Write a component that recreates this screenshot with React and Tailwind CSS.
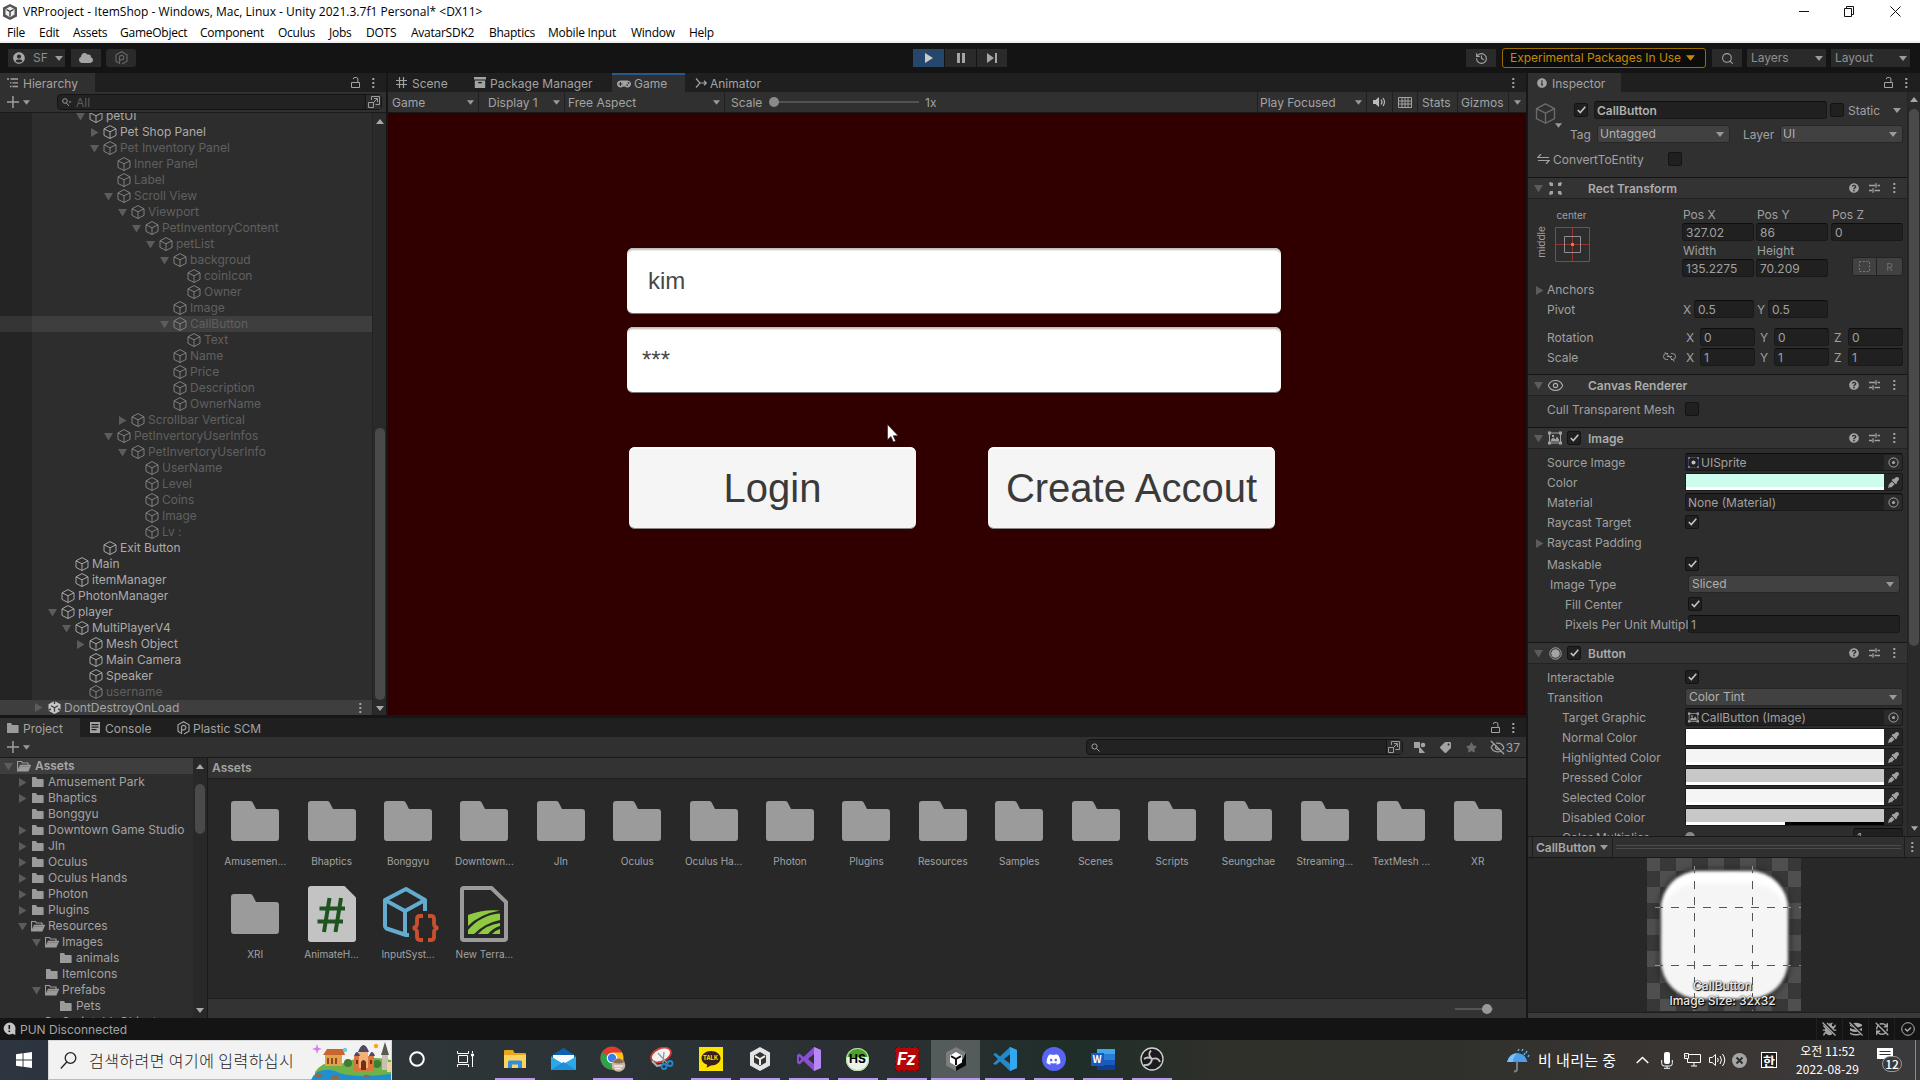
import React from "react";
import { FaDiscord, FaCloud, FaGamepad, FaTag, FaStar, FaUserCircle, FaInfoCircle, FaQuestionCircle, FaEyeDropper } from "react-icons/fa";
import { EyeOff, Eye, History, Search, Bug, RefreshCwOff } from "lucide-react";

/* ---------- small shared glyphs ---------- */

const Down = ({ c = "#9a9a9a", w = 8, h = 5, className = "" }) => (
  <svg width={w} height={h} viewBox="0 0 8 5" className={"shrink-0 " + className}><path d="M0 0h8L4 5z" fill={c} /></svg>
);
const Up = ({ className = "" }) => (
  <svg width="8" height="5" viewBox="0 0 8 5" className={className}><path d="M0 5h8L4 0z" fill="#a8a8a8" /></svg>
);
const Fold = ({ open, c = "#5c5c5c" }) => (
  <svg width="9" height="9" viewBox="0 0 9 9" className="shrink-0">
    <path d={open ? "M0 1h9L4.5 8.5z" : "M1 0v9l7.5-4.5z"} fill={c} />
  </svg>
);
const Dots = ({ c = "#a3a3a3" }) => (
  <svg width="3" height="12" viewBox="0 0 3 12" className="shrink-0"><path d="M.3 1h2v2h-2zM.3 5h2v2h-2zM.3 9h2v2h-2z" fill={c} /></svg>
);
const Lock = () => (
  <svg width="9" height="11" viewBox="0 0 9 11" fill="none" stroke="#a3a3a3" className="shrink-0"><path d="M.5 5.5h8v5h-8zM6.900 5V2a1.600 1.600 0 0 0-1.600-1.500H4A1.600 1.600 0 0 0 2.300 2.200" /></svg>
);
const Cube = ({ c = "#979797", s = 14, w = 1 }) => (
  <svg width={s} height={s} viewBox="0 0 14 14" fill="none" stroke={c} strokeWidth={w} strokeLinejoin="round" className="shrink-0">
    <path d="M7 .6 13 3.800v6.600L7 13.500 1 10.400V3.800zM1 3.800l6 3 6-3M7 6.800v6.700" />
  </svg>
);
const Folder = ({ open }) => (
  <svg width="14" height="12" viewBox="0 0 14 12" className="shrink-0">
    {open ? (
      <path d="M.5 11V1.500h4l1 1.500h5.500v2M.8 11l2.700-5.700H13.400L11 11z" fill="none" stroke="#9b9b9b" strokeWidth="1.200" />
    ) : (
      <path d="M1 1.500Q1 1 1.500 1H5l1.200 2H12q.6 0 .6.6v6.900q0 .5-.6.5H1.500Q1 11 1 10.500z" fill="#9b9b9b" />
    )}
    {open && <path d="M3.500 6.200H13L11 11H1z" fill="#9b9b9b" />}
  </svg>
);
const SceneLogo = () => (
  <svg width="13" height="13" viewBox="0 0 13 13" className="ml-[5px] shrink-0">
    <path d="M6.500 0 12.500 3.300v6.400L6.500 13 .5 9.700V3.300z" fill="#c6c6c6" />
    <path d="M6.500 6.800v4M6.500 6.800 3 4.800M6.500 6.800 10 4.800" stroke="#3e3e3e" strokeWidth="1.300" />
    <path d="M5.800 0h1.400v3H5.800zM0 8.500l2.600-1.300.7 1.200L.6 10zM13 8.500l-2.600-1.300-.7 1.200 2.700 1.600z" fill="#3e3e3e" />
  </svg>
);
const Plastic = ({ c }) => (
  <svg width="13" height="14" viewBox="0 0 13 14" fill="none" stroke={c} strokeWidth="1.200">
    <path d="M3.500 12 1 10.200V3.800L6.500.8 12 3.800v6.400L7 13M4.500 13V6a2.200 2.200 0 1 1 2.200 2.800H5" />
  </svg>
);
const Plus = () => (
  <svg width="12" height="12" viewBox="0 0 12 12" className="shrink-0"><path d="M5.200 0h1.500v5.200H12v1.500H6.700V12H5.200V6.700H0V5.200h5.200z" fill="#9e9e9e" /></svg>
);
const Sliders = () => (
  <svg width="11" height="10" viewBox="0 0 11 10" className="shrink-0"><path d="M0 2.500h6M8.500 2.500H11M7 .2v4.600M0 7.500h3M5.500 7.500H11M4 5.200v4.600" stroke="#a3a3a3" strokeWidth="1.300" fill="none" /></svg>
);
const Popout = () => (
  <svg width="12" height="12" viewBox="0 0 12 12" fill="none" stroke="#9a9a9a"><path d="M3.500.5h8v8h-4M3.500.5V4M.5 6.500h5v5h-5zM5 7l4.500-4.500M6 2.500h3.500V6" /></svg>
);
const Check = ({ on = true, className = "" }) => (
  <span className={"flex h-[14px] w-[14px] shrink-0 items-center justify-center rounded-[2px] border border-[#131313] bg-[#202020] " + className}>
    {on && <svg width="9" height="8" viewBox="0 0 9 8"><path d="M.8 4 3.300 6.500 8.300.8" fill="none" stroke="#c4c4c4" strokeWidth="1.600" /></svg>}
  </span>
);

/* ---------- window chrome ---------- */

const MENU = [["File", 32], ["Edit", 34], ["Assets", 47], ["GameObject", 80], ["Component", 78], ["Oculus", 51], ["Jobs", 37], ["DOTS", 45], ["AvatarSDK2", 78], ["Bhaptics", 59], ["Mobile Input", 83], ["Window", 58], ["Help", 40]];

function TitleBar() {
  return (
    <div className="h-[43px] shrink-0 border-b-2 border-[#eef0f0] bg-white text-[12px] text-black font-['Open_Sans','Noto_Sans_CJK_KR',sans-serif]">
      <div className="flex h-[22px] items-center pt-px">
        <svg width="14" height="16" viewBox="0 0 14 16" className="ml-[3px]"><path d="M7 0l7 3.500v9L7 16l-7-3.500v-9z" fill="#555" /><path d="M7 2.500l4.500 2.700v5.400L7 13.200l-4.500-2.600V5.200z" fill="#eee" /><path d="M7 7.500v5M7 7.500 3.500 5.500M7 7.500l3.500-2" stroke="#333" strokeWidth="1.300" /></svg>
        <span className="ml-[6px] whitespace-nowrap tracking-[0.02px]">VRProoject - ItemShop - Windows, Mac, Linux - Unity 2021.3.7f1 Personal* &lt;DX11&gt;</span>
        <span className="grow" />
        <svg width="102" height="11" viewBox="0 0 102 11" fill="none" stroke="#111" className="mr-[19px]">
          <path d="M0 5.500h10M45.500 2.500h7v8h-7zM47.500 2.500v-2h7v8h-2M91.500.5l10 10M101.500.5l-10 10" />
        </svg>
      </div>
      <div className="flex h-[21px] items-center pl-[7px] tracking-[-0.25px]">
        {MENU.map(([m, w]) => <span key={m} className="shrink-0 whitespace-nowrap" style={{ width: w }}>{m}</span>)}
      </div>
    </div>
  );
}

const Btn = ({ className = "", children }) => (
  <div className={"flex h-[18px] shrink-0 items-center bg-[#2a2a2a] " + className}>{children}</div>
);

function TopBar() {
  return (
    <div className="flex h-[30px] shrink-0 items-center bg-[#141414] text-[12px] text-[#8f8f8f]">
      <Btn className="ml-[8px] w-[57px] pl-[5px]"><FaUserCircle size={12} color="#a5a5a5" /><span className="ml-[8px] w-[22px]">SF</span><Down /></Btn>
      <Btn className="ml-[6px] w-[30px] justify-center"><FaCloud size={14} color="#a5a5a5" /></Btn>
      <Btn className="ml-[5px] w-[30px] justify-center rounded-[3px] bg-[#1d1d1d]"><Plastic c="#666" /></Btn>
      <Btn className="ml-[777px] w-[31px] justify-center bg-[#25476b]"><svg width="8" height="10"><path d="M0 0v10l8-5z" fill="#c9c9c9" /></svg></Btn>
      <Btn className="ml-px w-[31px] justify-center"><svg width="8" height="10"><path d="M0 0h3v10H0zM5 0h3v10H5z" fill="#a5a5a5" /></svg></Btn>
      <Btn className="ml-px w-[30px] justify-center"><svg width="10" height="10"><path d="M0 0v10l7-5zM8 0h2v10H8z" fill="#a5a5a5" /></svg></Btn>
      <span className="grow" />
      <Btn className="w-[30px] justify-center"><History size={13} color="#a5a5a5" /></Btn>
      <div className="ml-[6px] flex h-[20px] w-[204px] items-center justify-between rounded-[3px] border border-[#9a6c00] bg-[#0c0c0c] pl-[7px] pr-[10px] text-[#c48b00]">
        <span className="whitespace-nowrap tracking-[-0.03px]">Experimental Packages In Use</span><Down c="#c48b00" w={9} h={6} />
      </div>
      <Btn className="ml-[6px] w-[30px] justify-center"><Search size={13} color="#a5a5a5" /></Btn>
      <Btn className="ml-[5px] w-[79px] justify-between pl-[4px] pr-[3px]">Layers<Down /></Btn>
      <Btn className="ml-[5px] mr-[10px] w-[79px] justify-between pl-[4px] pr-[3px]">Layout<Down /></Btn>
    </div>
  );
}

/* ---------- hierarchy ---------- */

// name, depth, fold state (o open, c closed, - none), active, selected
const TREE = [
  ["petUI", 4, "o", 1], ["Pet Shop Panel", 5, "c", 1], ["Pet Inventory Panel", 5, "o", 0], ["Inner Panel", 6, "-", 0], ["Label", 6, "-", 0],
  ["Scroll View", 6, "o", 0], ["Viewport", 7, "o", 0], ["PetInventoryContent", 8, "o", 0], ["petList", 9, "o", 0], ["backgroud", 10, "o", 0],
  ["coinIcon", 11, "-", 0], ["Owner", 11, "-", 0], ["Image", 10, "-", 0], ["CallButton", 10, "o", 0, 1], ["Text", 11, "-", 0], ["Name", 10, "-", 0],
  ["Price", 10, "-", 0], ["Description", 10, "-", 0], ["OwnerName", 10, "-", 0], ["Scrollbar Vertical", 7, "c", 0], ["PetInvertoryUserInfos", 6, "o", 0],
  ["PetInvertoryUserInfo", 7, "o", 0], ["UserName", 8, "-", 0], ["Level", 8, "-", 0], ["Coins", 8, "-", 0], ["Image", 8, "-", 0], ["Lv :", 8, "-", 0],
  ["Exit Button", 5, "-", 1], ["Main", 3, "-", 1], ["itemManager", 3, "-", 1], ["PhotonManager", 2, "-", 1], ["player", 2, "o", 1],
  ["MultiPlayerV4", 3, "o", 1], ["Mesh Object", 4, "c", 1], ["Main Camera", 4, "-", 1], ["Speaker", 4, "-", 1], ["username", 4, "-", 0],
];

function Hierarchy() {
  return (
    <section className="flex w-[386px] shrink-0 flex-col bg-[#2d2d2d]">
      <div className="flex h-[19px] shrink-0 items-center bg-[#1f1f1f]">
        <div className="flex h-full w-[95px] items-center bg-[#303030] pl-[7px] pt-[2px]">
          <svg width="12" height="10" viewBox="0 0 12 10" className="-mt-[2px]"><path d="M0 1h2M3.500 1H11M3 4.800h1.500M5.500 4.800H11M3 8.500h1.500M5.500 8.500H11" stroke="#a3a3a3" strokeWidth="1.300" /></svg>
          <span className="ml-[4px]">Hierarchy</span>
        </div>
        <span className="grow" />
        <Lock /><span className="w-[12px]" /><Dots /><span className="w-[11px]" />
      </div>
      <div className="flex h-[21px] shrink-0 items-center border-b border-[#1a1a1a] bg-[#303030] pl-[7px]">
        <Plus /><Down className="ml-[4px]" w={7} />
        <div className="ml-[27px] flex h-[16px] w-[325px] items-center rounded-[4px] border border-[#141414] bg-[#222] pl-[4px] text-[#5d5d5d]">
          <svg width="10" height="9" viewBox="0 0 10 9"><circle cx="3" cy="3" r="2.300" fill="none" stroke="#9a9a9a" /><path d="M4.500 5 7 8" stroke="#9a9a9a" /><path d="M6.500 3.500h3L8 5z" fill="#9a9a9a" /></svg>
          <span className="ml-[4px] grow pt-px">All</span>
          <span className="flex h-full w-[16px] items-center justify-center border-l border-[#141414] bg-[#2d2d2d]"><Popout /></span>
        </div>
      </div>
      <div className="flex h-[602px] shrink-0">
        <div className="flex min-w-0 grow flex-col justify-end overflow-hidden bg-[linear-gradient(90deg,#242424_32px,#2d2d2d_32px)]">
          {TREE.map(([n, d, f, act, sel], i) => (
            <div key={i} className={"flex h-[16px] shrink-0 items-center " + (sel ? "bg-[linear-gradient(90deg,#353535_32px,#3e3e3e_32px)] " : "") + (act ? "text-[#ababab]" : "text-[#606060]")} style={{ paddingLeft: 20 + d * 14 }}>
              <span className="flex w-[13px] shrink-0"> {f !== "-" && <Fold open={f === "o"} />}</span>
              <Cube c={act ? "#a6a6a6" : "#808080"} />
              <span className="ml-[3px] whitespace-nowrap">{n}</span>
            </div>
          ))}
          <div className="flex h-[15px] shrink-0 items-center bg-[#3e3e3e] pl-[34px] text-[#a3a3a3]">
            <Fold /><SceneLogo /><span className="ml-[3px] grow">DontDestroyOnLoad</span><Dots /><span className="w-[10px]" />
          </div>
        </div>
        <div className="flex w-[14px] shrink-0 flex-col items-center border-l border-[#232323] bg-[#2a2a2a]">
          <Up className="mt-[6px]" />
          <div className="mt-[304px] h-[272px] w-[10px] rounded-full bg-[#4a4a4a]" />
          <Down className="mt-[6px]" c="#a8a8a8" />
        </div>
      </div>
    </section>
  );
}

/* ---------- game view ---------- */

const Field = ({ children, className }) => (
  <div className={"h-[66px] w-[654px] rounded-[6px] border-b border-[#777] bg-white text-[24px] leading-[24px] text-[#484848] shadow-[inset_0_3px_2px_-1px_#bdbdbd] font-['Liberation_Sans',sans-serif] " + className}>{children}</div>
);
const GameBtn = ({ children }) => (
  <div className="flex h-[82px] w-[287px] items-center justify-center whitespace-nowrap rounded-[6px] border-b border-[#888] bg-[#f5f5f5] text-[40px] leading-none text-[#3a3a3a] shadow-[inset_0_3px_1px_-1px_#fff] font-['Liberation_Sans',sans-serif]">{children}</div>
);

function GameView() {
  return (
    <section className="flex h-[642px] shrink-0 flex-col">
      <div className="flex h-[19px] shrink-0 items-center bg-[#1f1f1f] text-[#a3a3a3]">
        <svg width="11" height="11" viewBox="0 0 11 11" className="ml-[8px]"><path d="M3.500 0v11M7.500 0v11M0 3.500h11M0 7.500h11" stroke="#a3a3a3" strokeWidth="1.200" /></svg>
        <span className="ml-[5px] w-[62px] pt-[2px]">Scene</span>
        <svg width="12" height="11" viewBox="0 0 12 11"><path d="M0 0h12v2.500H0zM.8 3.500h10.400V11H.8zM4 5v1.300h4V5z" fill="#a3a3a3" fillRule="evenodd" /></svg>
        <span className="ml-[4px] w-[122px] pt-[2px]">Package Manager</span>
        <div className="flex h-full w-[73px] items-center border-t-2 border-[#2a568a] bg-[#303030] pl-[5px]"><FaGamepad size={14} /><span className="ml-[3px] pt-px">Game</span></div>
        <svg width="12" height="10" viewBox="0 0 12 10" className="ml-[10px]" fill="none" stroke="#a3a3a3" strokeWidth="1.200"><path d="M1 .5 5 5 1 9.500M5 5h6M9 2.800 11.300 5 9 7.200" /></svg>
        <span className="ml-[3px] pt-[2px]">Animator</span>
        <span className="grow" /><Dots /><span className="w-[11px]" />
      </div>
      <div className="flex h-[21px] shrink-0 items-center border-b border-[#1a1a1a] bg-[#303030]">
        <span className="flex h-full w-[91px] items-center justify-between border-r border-[#202020] pl-[4px] pr-[4px] pt-px">Game<Down w={7} /></span>
        <span className="flex h-full w-[86px] items-center justify-between border-r border-[#202020] pl-[9px] pr-[4px] pt-px">Display 1<Down w={7} /></span>
        <span className="flex h-full w-[160px] items-center justify-between border-r border-[#202020] pl-[3px] pr-[4px] pt-px">Free Aspect<Down w={7} /></span>
        <span className="ml-[6px] w-[38px] pt-px">Scale</span>
        <span className="flex h-[2px] w-[150px] items-center bg-[linear-gradient(90deg,transparent_5px,#525252_5px)]"><span className="h-[10px] w-[10px] shrink-0 rounded-full bg-[#8a8a8a]" /></span>
        <span className="ml-[6px] pt-px">1x</span>
        <span className="grow" />
        <span className="flex h-full w-[110px] items-center justify-between border-x border-[#202020] pl-[2px] pr-[4px] pt-px">Play Focused<Down w={7} /></span>
        <span className="flex h-full w-[26px] items-center justify-center border-r border-[#202020]">
          <svg width="14" height="10" viewBox="0 0 14 10"><path d="M0 3h2.500L6 0v10L2.500 7H0z" fill="#bbb" /><path d="M8 2.500q2 2.500 0 5M10 1q3 4 0 8" stroke="#bbb" fill="none" strokeWidth="1.200" /></svg>
        </span>
        <span className="flex h-full w-[25px] items-center justify-center border-r border-[#202020]">
          <svg width="14" height="11" viewBox="0 0 14 11" fill="none" stroke="#a3a3a3"><path d="M.5.5h13v10H.5zM.5 4h13M.5 7h13M4 .5v10M7 .5v10M10 .5v10" /></svg>
        </span>
        <span className="flex h-full w-[40px] items-center border-r border-[#202020] pl-[4px] pt-px">Stats</span>
        <span className="flex h-full w-[51px] items-center border-r border-[#202020] pl-[3px] pt-px">Gizmos</span>
        <span className="flex w-[17px] justify-center"><Down w={7} /></span>
      </div>
      <div className="relative flex h-[602px] shrink-0 flex-col items-start bg-[#300000] pl-[239px] pt-[135px]">
        <Field className="pl-[21px] pt-[21px]">kim</Field>
        <Field className="mt-[13px] pl-[15px] pt-[21px]">***</Field>
        <div className="ml-[2px] mt-[54px] flex gap-[72px]"><GameBtn>Login</GameBtn><GameBtn>Create Accout</GameBtn></div>
        <svg width="12" height="19" viewBox="0 0 12 19" className="absolute left-[499px] top-[311px]"><path d="M.5.5v15.300l3.500-3.300 2.400 5.500 2.200-1-2.400-5.300h4.900z" fill="#fff" stroke="#222" strokeWidth=".6" /></svg>
      </div>
    </section>
  );
}

/* ---------- project ---------- */

const PTREE = [
  ["Amusement Park", 1, "c"], ["Bhaptics", 1, "c"], ["Bonggyu", 1, "-"], ["Downtown Game Studio", 1, "c"], ["JIn", 1, "c"], ["Oculus", 1, "c"],
  ["Oculus Hands", 1, "c"], ["Photon", 1, "c"], ["Plugins", 1, "c"], ["Resources", 1, "o"], ["Images", 2, "o"], ["animals", 3, "-"],
  ["ItemIcons", 2, "-"], ["Prefabs", 2, "o"], ["Pets", 3, "-"], ["ScriptableObjects", 2, "-"],
];
const GRID = ["Amusemen...", "Bhaptics", "Bonggyu", "Downtown...", "JIn", "Oculus", "Oculus Ha...", "Photon", "Plugins", "Resources", "Samples", "Scenes", "Scripts", "Seungchae", "Streaming...", "TextMesh ...", "XR", "XRI"];

const BigFolder = () => (
  <svg width="48" height="40" viewBox="0 0 48 40"><path d="M3 0h16.500q1.500 0 2.200 1.500L25 8h20q3 0 3 3v26q0 3-3 3H3q-3 0-3-3V3q0-3 3-3z" fill="#9b9b9b" /></svg>
);
const ScriptFile = () => (
  <svg width="48" height="56" viewBox="0 0 48 56"><path d="M3 0h33.500L48 11.500V53q0 3-3 3H3q-3 0-3-3V3q0-3 3-3z" fill="#c3c3c3" /><path d="m21.500 12-5.500 34M33 12l-5.500 34M11.500 22.500h25.500M9.500 35.500H35" stroke="#1d5420" strokeWidth="4" /></svg>
);
const InputFile = () => (
  <svg width="57" height="56" viewBox="0 0 57 56" fill="none" className="ml-[6px]">
    <path d="M42 25V14L23 3 2 14v26q0 1.500 1.500 2.500L23 49h3M2 14l20 11 20-11M22 25v23" stroke="#63accf" strokeWidth="4" strokeLinejoin="round" />
    <path d="M40 30h-3q-3 0-3 3v5q0 3-4 4 4 1 4 4v5q0 3 3 3h3M45 30h3q3 0 3 3v5q0 3 4 4-4 1-4 4v5q0 3-3 3h-3" stroke="#c9502f" strokeWidth="3.800" />
  </svg>
);
const TerrainFile = () => (
  <svg width="48" height="56" viewBox="0 0 48 56"><path d="M4 2h27.500L46 16v36q0 2-2 2H4q-2 0-2-2V4q0-2 2-2z" fill="#282828" stroke="#9b9b9b" strokeWidth="4" /><path d="M8 29q15-6 32-4.500Q20 28 8 40zM8 44q13-15 32-16.500V34Q25 37 14 48H8zM18 48q8-9 22-11v3q-7 2-12 8zM32 48q3-3.500 8-5v5z" fill="#8ecb43" /></svg>
);
const Tile = ({ label, children }) => (
  <div className="flex h-[93px] w-[76.420px] flex-col items-center">
    <div className="flex h-[56px] items-center">{children}</div>
    <span className="mt-[6px] whitespace-nowrap text-[10px] leading-[12px] text-[#a3a3a3]">{label}</span>
  </div>
);

function Project() {
  return (
    <section className="mt-[3px] flex h-[300px] shrink-0 flex-col">
      <div className="flex h-[19px] shrink-0 items-center bg-[#1f1f1f] text-[#a3a3a3]">
        <div className="flex h-full w-[80px] items-center bg-[#303030] pl-[6px]"><Folder /><span className="ml-[3px] pt-[2px]">Project</span></div>
        <svg width="10" height="11" viewBox="0 0 10 11" className="ml-[10px]"><path d="M0 0h10v11H0zM1.500 2v1.200h7V2zM1.500 4.500v1.200h7V4.500zM1.500 7v1.200h5V7z" fill="#a3a3a3" fillRule="evenodd" /></svg>
        <span className="ml-[5px] w-[72px] pt-[2px]">Console</span><Plastic c="#a3a3a3" /><span className="ml-[3px] pt-[2px]">Plastic SCM</span>
        <span className="grow" /><Lock /><span className="w-[12px]" /><Dots /><span className="w-[11px]" />
      </div>
      <div className="flex h-[21px] shrink-0 items-center border-b border-[#1a1a1a] bg-[#303030] pl-[7px]">
        <Plus /><Down className="ml-[4px]" w={7} />
        <span className="grow" />
        <div className="flex h-[16px] w-[317px] items-center rounded-[4px] border border-[#141414] bg-[#222] pl-[4px]">
          <Search size={9} color="#a3a3a3" className="-scale-x-100 rotate-90 opacity-0 w-0" /><svg width="9" height="9" viewBox="0 0 9 9" fill="none" stroke="#a3a3a3"><circle cx="3.500" cy="3.500" r="2.600" /><path d="m5.500 5.500 3 3" /></svg><span className="grow" />
          <span className="flex h-full w-[16px] items-center justify-center border-l border-[#141414] bg-[#2d2d2d]"><Popout /></span>
        </div>
        <svg width="12" height="11" viewBox="0 0 12 11" className="ml-[11px]"><path d="M0 0h6v5l5 6H5V6H0z" fill="#a3a3a3" /><circle cx="9" cy="3" r="2.300" fill="#a3a3a3" /></svg>
        <FaTag size={11} color="#a3a3a3" className="ml-[14px] -scale-x-100" />
        <FaStar size={11} color="#6a6a6a" className="ml-[15px]" />
        <EyeOff size={15} color="#a3a3a3" className="ml-[13px]" /><span className="ml-px mr-[6px] pt-px">37</span>
      </div>
      <div className="flex h-[260px] shrink-0">
        <div className="h-full w-[193px] shrink-0 overflow-hidden bg-[#2d2d2d]">
          <div className="flex h-[16px] items-center bg-[#3e3e3e] pl-[4px] font-semibold text-[#a8a8a8]"><Fold open /><span className="w-[4px]" /><Folder open /><span className="ml-[4px]">Assets</span></div>
          {PTREE.map(([n, d, f]) => (
            <div key={n} className="flex h-[16px] items-center text-[#a3a3a3]" style={{ paddingLeft: 4 + d * 14 }}>
              <span className="flex w-[13px] shrink-0">{f !== "-" && <Fold open={f === "o"} />}</span><Folder open={f === "o"} /><span className="ml-[3px] whitespace-nowrap">{n}</span>
            </div>
          ))}
        </div>
        <div className="flex w-[15px] shrink-0 flex-col items-center border-r border-[#1a1a1a] bg-[#282828]">
          <Up className="mt-[6px]" /><div className="mt-[15px] h-[50px] w-[10px] rounded-full bg-[#4a4a4a]" /><Down className="mt-[174px]" c="#a8a8a8" />
        </div>
        <div className="flex min-w-0 grow flex-col bg-[#282828]">
          <div className="flex h-[21px] shrink-0 items-center border-b border-[#1e1e1e] bg-[#333] pl-[4px] font-semibold text-[#a3a3a3]">Assets</div>
          <div className="grid h-[219px] shrink-0 grid-cols-[repeat(17,76.420px)] content-start overflow-hidden pl-[9px] pt-[14px]">
            {GRID.map((g) => <Tile key={g} label={g}><BigFolder /></Tile>)}
            <Tile label="AnimateH..."><ScriptFile /></Tile>
            <Tile label="InputSyst..."><InputFile /></Tile>
            <Tile label="New Terra..."><TerrainFile /></Tile>
          </div>
          <div className="flex grow items-center border-t border-[#1e1e1e] bg-[#333]">
            <span className="ml-[1247px] flex h-[2px] w-[38px] items-center bg-[#555]"><span className="ml-[27px] h-[10px] w-[10px] shrink-0 rounded-full bg-[#999]" /></span>
          </div>
        </div>
      </div>
    </section>
  );
}

/* ---------- inspector ---------- */

const In = ({ children, className = "" }) => (
  <span className={"flex h-[18px] shrink-0 items-center rounded-[3px] border border-[#191919] border-t-[#0d0d0d] bg-[#202020] pl-[3px] pt-px " + className}>{children}</span>
);
const Drop = ({ children, className = "" }) => (
  <span className={"flex h-[18px] shrink-0 items-center justify-between rounded-[3px] border border-[#262626] bg-[#414141] pl-[3px] pr-[5px] text-[#b0b0b0] " + className}>{children}<Down /></span>
);
const CompHead = ({ icon, check, title }) => (
  <div className="flex h-[22px] shrink-0 items-center border-y border-b-[#222] border-t-[#141414] bg-[#333] pl-[6px]">
    <Fold open /><span className="ml-[2px] flex w-[20px] justify-center">{icon}</span>
    <span className="ml-[3px] w-[20px]">{check && <Check className="-ml-px" />}</span>
    <span className="grow pt-[2px] font-semibold text-[#ababab]">{title}</span>
    <FaQuestionCircle size={10} color="#a3a3a3" /><span className="w-[10px]" /><Sliders /><span className="w-[13px]" /><Dots /><span className="w-[11px]" />
  </div>
);
const Row = ({ label, children, pad = 19, w = 157, fold }) => (
  <div className="flex h-[20px] shrink-0 items-center">
    <span className="flex shrink-0 items-center overflow-hidden whitespace-nowrap pt-[2px]" style={{ width: w, paddingLeft: fold ? pad - 12 : pad }}>
      {fold && <span className="mr-[3px] flex"><Fold /></span>}{label}
    </span>
    {children}
  </div>
);
const ObjField = ({ children }) => (
  <In className="w-[218px] overflow-hidden !pl-[2px]"><span className="flex grow items-center gap-[2px] whitespace-nowrap">{children}</span>
    <span className="flex h-full w-[18px] items-center justify-center bg-[#2b2b2b]"><svg width="11" height="11" viewBox="0 0 11 11"><circle cx="5.500" cy="5.500" r="4.600" fill="none" stroke="#a3a3a3" /><circle cx="5.500" cy="5.500" r="1.600" fill="#a3a3a3" /></svg></span>
  </In>
);
const ColorField = ({ c, half }) => (
  <span className="flex h-[18px] w-[218px] shrink-0 rounded-[2px] border border-[#191919] bg-[#262626]">
    <span className="flex w-[198px] flex-col"><span className="grow" style={{ background: c }} /><span className={"h-[3px] " + (half ? "bg-[linear-gradient(90deg,#fff_50%,#000_50%)]" : "bg-white")} /></span>
    <span className="flex grow items-center justify-center"><FaEyeDropper size={11} color="#a3a3a3" /></span>
  </span>
);
const ImgIcon = ({ s = 13 }) => (
  <svg width={s} height={s} viewBox="0 0 14 13" fill="none" stroke="#a3a3a3"><path d="M1.500 1.500h11v10h-11z" /><path d="M0 0h3v3H0zM11 0h3v3h-3zM0 10h3v3H0zM11 10h3v3h-3zM3 10V8l2.500-2 2 2 1.500-3 2 3v2zM4 3.500h2v2H4z" fill="#a3a3a3" stroke="none" /></svg>
);

function Inspector() {
  return (
    <section className="flex w-[392px] shrink-0 flex-col bg-[#2d2d2d]">
      <div className="flex h-[19px] shrink-0 items-center bg-[#1f1f1f]">
        <div className="flex h-full w-[93px] items-center bg-[#303030] pl-[9px]"><FaInfoCircle size={10} /><span className="ml-[5px] pt-[2px]">Inspector</span></div>
        <span className="grow" /><Lock /><span className="w-[12px]" /><Dots /><span className="w-[12px]" />
      </div>
      <div className="flex h-[744px] shrink-0 overflow-hidden">
        <div className="flex h-full w-[379px] shrink-0 flex-col text-[#a0a0a0]">
          <div className="flex h-[85px] shrink-0 bg-[#303030]">
            <div className="flex w-[41px] flex-col items-start pl-[7px] pt-[11px]"><Cube s={21} c="#6c6c6c" w={0.9} /><Down className="ml-[20px] -mt-px" w={7} /></div>
            <div className="flex flex-col">
              <div className="mt-[9px] flex h-[18px] items-center"><Check className="ml-[5px]" /><In className="ml-[6px] w-[233px] !pl-[2px] font-semibold text-[#b0b0b0]">CallButton</In><Check on={false} className="ml-[3px]" /><span className="ml-[4px] w-[45px] pt-px">Static</span><Down /></div>
              <div className="mt-[6px] flex h-[18px] items-center"><span className="ml-px w-[27px] pt-[2px]">Tag</span><Drop className="w-[133px] !pl-[2px]">Untagged</Drop><span className="ml-[13px] w-[37px] pt-[2px]">Layer</span><Drop className="w-[123px] !pl-[2px]">UI</Drop></div>
              <div className="-ml-[32px] mt-[7px] flex h-[18px] items-center">
                <svg width="13" height="10" viewBox="0 0 13 10" fill="none" stroke="#a3a3a3" strokeWidth="1.200"><path d="M4 0 .8 3.500H12M9 10l3.200-3.500H1" /></svg>
                <span className="ml-[3px] w-[115px] pt-px">ConvertToEntity</span><Check on={false} />
              </div>
            </div>
          </div>

          <CompHead title="Rect Transform" icon={<svg width="13" height="13" viewBox="0 0 13 13"><path d="M0 1l1-1 3 1v3H1zM12 0l1 1-1 3H9V1zM0 12l1-3h3v3l-3 1zM9 9h3l1 3-1 1-3-1z" fill="#a3a3a3" /></svg>} />
          <div className="flex h-[175px] shrink-0 flex-col">
            <div className="flex h-[80px] shrink-0">
              <div className="flex w-[154px] pt-[9px]">
                <div className="mt-[15px] flex h-[38px] w-[27px] items-center justify-center pr-px"><span className="-rotate-90 text-[10px]">middle</span></div>
                <div className="flex flex-col items-center"><span className="text-[10px] leading-[14px] -ml-[2px]">center</span>
                  <svg width="35" height="35" viewBox="0 0 35 35" className="mt-[5px]" fill="none"><path d="M17.500 0v35M0 17.500h35" stroke="#9c3131" /><path d="M.5.5h34v34H.5z" stroke="#5a5a5a" /><path d="M9.500 9.500h16v16h-16z" stroke="#8f8f8f" /><path d="M16 16h3v3h-3z" fill="#c58c10" /></svg>
                </div>
              </div>
              <div className="flex flex-col pt-[8px]">
                <div className="flex h-[16px] items-center"><span className="ml-px w-[74px]">Pos X</span><span className="w-[75px]">Pos Y</span><span>Pos Z</span></div>
                <div className="flex gap-[2px]"><In className="w-[72px]">327.02</In><In className="w-[72px]">86</In><In className="ml-px w-[72px]">0</In></div>
                <div className="mt-[2px] flex h-[16px] items-center"><span className="ml-px w-[74px]">Width</span><span>Height</span></div>
                <div className="flex gap-[2px]"><In className="w-[72px]">135.2275</In><In className="w-[72px]">70.209</In>
                  <span className="-mt-[2px] ml-[22px] flex h-[19px] w-[51px] rounded-[3px] border border-[#222] bg-[#414141] text-[10px] text-[#6f6f6f]">
                    <span className="flex w-[24px] items-center justify-center border-r border-[#222]"><svg width="11" height="11"><path d="M.5.5h10v10H.5z" fill="none" stroke="#777" strokeDasharray="2 1.500" /></svg></span><span className="flex grow items-center justify-center">R</span>
                  </span></div>
              </div>
            </div>
            <Row label="Anchors" fold />
            <Row label="Pivot" w={155}><span className="w-[11px] pt-px">X</span><In className="w-[60px]">0.5</In><span className="ml-[3px] w-[11px] pt-px">Y</span><In className="w-[60px]">0.5</In></Row>
            <div className="h-[8px] shrink-0" />
            <Row label="Rotation" w={158}><span className="w-[14px] pt-px">X</span><In className="w-[55px]">0</In><span className="ml-[5px] w-[14px] pt-px">Y</span><In className="w-[55px]">0</In><span className="ml-[5px] w-[14px] pt-px">Z</span><In className="w-[55px]">0</In></Row>
            <Row label="Scale" w={135}>
              <svg width="13" height="10" viewBox="0 0 13 10" fill="none" stroke="#9a9a9a" className="mr-[10px]"><path d="M5 1.500H3.500a3 3 0 0 0 0 6H5M8 1.500h1.500a3 3 0 0 1 0 6H8M4 4.500h5M1.500 0l10 9.500" /></svg>
              <span className="w-[14px] pt-px">X</span><In className="w-[55px]">1</In><span className="ml-[5px] w-[14px] pt-px">Y</span><In className="w-[55px]">1</In><span className="ml-[5px] w-[14px] pt-px">Z</span><In className="w-[55px]">1</In>
            </Row>
          </div>

          <CompHead title="Canvas Renderer" icon={<Eye size={17} color="#b0b0b0" strokeWidth={1.5} />} />
          <div className="h-[31px] shrink-0 pt-[3px]"><Row label="Cull Transparent Mesh"><Check on={false} /></Row></div>

          <CompHead title="Image" check icon={<ImgIcon s={14} />} />
          <div className="h-[193px] shrink-0 pt-[3px]">
            <Row label="Source Image"><ObjField><svg width="11" height="11"><path d="M.5.5h10v10H.5z" fill="none" stroke="#453c63" /><path d="M0 0h2v2H0zM9 0h2v2H9zM0 9h2v2H0zM9 9h2v2H9z" fill="#7b6cb0" /><circle cx="5.500" cy="5.500" r="2" fill="#c0c0c0" /></svg>UISprite</ObjField></Row>
            <Row label="Color"><ColorField c="#cdfdee" /></Row>
            <Row label="Material"><ObjField>None (Material)</ObjField></Row>
            <Row label="Raycast Target"><Check /></Row>
            <Row label="Raycast Padding" fold />
            <div className="h-[2px]" />
            <Row label="Maskable"><Check /></Row>
            <Row label="Image Type" pad={22} w={160}><Drop className="w-[212px]">Sliced</Drop></Row>
            <Row label="Fill Center" pad={37} w={160}><Check /></Row>
            <Row label="Pixels Per Unit Multipl" pad={37} w={160}><In className="w-[212px] !pl-[2px]">1</In></Row>
          </div>

          <CompHead title="Button" check icon={<svg width="13" height="13"><circle cx="6.500" cy="6.500" r="5.700" fill="none" stroke="#a3a3a3" /><circle cx="6.500" cy="6.500" r="4.300" fill="#a3a3a3" /></svg>} />
          <div className="shrink-0 pt-[3px]">
            <Row label="Interactable"><Check /></Row>
            <Row label="Transition"><Drop className="w-[218px]">Color Tint</Drop></Row>
            <Row label="Target Graphic" pad={34}><ObjField><ImgIcon s={11} />CallButton (Image)</ObjField></Row>
            <Row label="Normal Color" pad={34}><ColorField c="#fff" /></Row>
            <Row label="Highlighted Color" pad={34}><ColorField c="#f5f5f5" /></Row>
            <Row label="Pressed Color" pad={34}><ColorField c="#c8c8c8" /></Row>
            <Row label="Selected Color" pad={34}><ColorField c="#f5f5f5" /></Row>
            <Row label="Disabled Color" pad={34}><ColorField c="#c8c8c8" half /></Row>
            <Row label="Color Multiplier" pad={34}><span className="h-[10px] w-[10px] rounded-full bg-[#888]" /><span className="h-[2px] w-[150px] bg-[#525252]" /><In className="ml-[8px] w-[50px]">1</In></Row>
          </div>
        </div>
        <div className="flex grow flex-col items-center border-l border-[#232323] bg-[#2a2a2a]">
          <Up className="mt-[5px]" /><div className="mt-[7px] h-[537px] w-[10px] rounded-full bg-[#4a4a4a]" /><Down className="mt-[180px]" c="#a8a8a8" w={7} />
        </div>
      </div>
      <div className="flex h-[22px] shrink-0 items-center border-y border-[#191919] bg-[#303030]">
        <span className="ml-[4px] flex h-full w-[81px] items-center gap-[4px] border-x border-[#1e1e1e] pl-[3px] pt-px font-semibold text-[#a8a8a8]">CallButton<Down /></span>
        <span className="mx-[3px] h-[4px] grow border-y border-[#4c4c4c]" />
        <span className="flex h-full w-[16px] items-center justify-center border-l border-[#1e1e1e]"><Dots /></span>
      </div>
      <div className="flex h-[154px] shrink-0 justify-center overflow-hidden bg-[#282828]">
        <div className="relative mr-px h-[153px] w-[154px] bg-[#383838] bg-[conic-gradient(#383838_25%,#4f4f4f_0_50%,#383838_0_75%,#4f4f4f_0)] bg-[length:32px_32px] bg-[position:-3px_-3px]">
          <div className="absolute left-[14px] top-[13px] h-[128px] w-[127px] rounded-[38px] bg-[#f5f5f5] shadow-[0_0_5px_2px_#222,inset_0_14px_5px_-2px_#fff] blur-[1.5px]" />
          <svg width="154" height="153" className="absolute left-0 top-0" fill="none"><path d="M47.500 0v153M105.500 0v153M0 49.500h154M0 107.500h154" stroke="#ccc" strokeDasharray="8 8" strokeDashoffset="8" opacity=".6" /><path d="M47.500 12v129M105.500 12v129M13 49.500h128M13 107.500h128" stroke="#555" strokeDasharray="8 8" strokeDashoffset="5" /></svg>
          <div className="absolute bottom-[3px] left-0 w-full pr-[2px] text-center text-[12px] font-medium leading-[15px] text-[#e8e8e8] [font-feature-settings:'calt'_0] [text-shadow:1px_1px_1px_#000,0_0_2px_#000]"><div>CallButton</div><div>Image Size: 32x32</div></div>
        </div>
      </div>
      <div className="grow border-t border-[#1e1e1e] bg-[#3a3a3a]" />
    </section>
  );
}

/* ---------- bottom bars ---------- */

const Slash = () => (
  <svg width="15" height="14" className="absolute left-0 top-0"><path d="M1.500.5l12.500 12.500" stroke="#141414" strokeWidth="3" /><path d="M.5.5l13 13" stroke="#a8a8a8" strokeWidth="1.200" /></svg>
);

function StatusBar() {
  const cell = "flex h-full w-[26px] items-center justify-center border-l border-[#202020]";
  return (
    <div className="flex h-[22px] shrink-0 items-center bg-[#141414]">
      <svg width="13" height="14" viewBox="0 0 13 14" className="ml-[3px]"><path d="M6.500.5a6 6 0 0 1 5.800 7.500V13L9.500 11.800A6 6 0 1 1 6.500.5z" fill="#c4c4c4" /><path d="M6.300 3v4.200M6.300 8.500v1.600" stroke="#141414" strokeWidth="1.600" /></svg>
      <span className="ml-[4px] grow pt-[2px]">PUN Disconnected</span>
      <span className={cell}><span className="relative flex"><Bug size={15} color="#a8a8a8" fill="#a0a0a0" /><Slash /></span></span>
      <span className={cell}><span className="relative flex"><svg width="14" height="14" viewBox="0 0 14 14" fill="#a8a8a8"><path d="M1 2.500q6-3.500 12 0v1.500q-6 3-12 0zM1 6q6 3 12 0v2.500q-6 3-12 0zM1 10.500q6 3 12 0v1.500q-6 3-12 0z" /></svg><Slash /></span></span>
      <span className={cell}><RefreshCwOff size={14} color="#a8a8a8" strokeWidth={2.5} /></span>
      <span className={cell}><svg width="14" height="14" fill="none" stroke="#b0b0b0"><circle cx="7" cy="7" r="6.300" /><path d="m4 6.800 2.300 2.300L10 5.500" strokeWidth="1.400" /></svg></span>
    </div>
  );
}

const Castle = () => (
  <svg width="80" height="40" viewBox="0 0 80 40" className="shrink-0">
    <path d="M4 32Q14 18 30 24q20-10 50-4v20H4z" fill="#6fb14a" />
    <path d="M0 40Q6 26 24 31q14 8 56 3v6z" fill="#1f8fd0" />
    <path d="M14 15h17v11H14z" fill="#e5a04b" /><path d="m12 15 4-6h16l2 6z" fill="#c9662e" /><path d="M16 18h2v6h-2zM20 18h2v6h-2zM24 18h2v6h-2z" fill="#8b4a1f" />
    <circle cx="37" cy="23" r="4" fill="#3e7d34" /><circle cx="66" cy="24" r="4" fill="#3e7d34" />
    <path d="M43 16h20v15H43z" fill="#d9783c" /><path d="M48 12h9v16h-9z" fill="#f0b277" />
    <path d="M43 16q3-8 6 0zM47 12q5.500-14 11 0zM58 16q3-8 6 0z" fill="#4e4a61" /><path d="M50 22q2.500-4 5 0v8h-5zM45 20h2v4h-2zM59 20h2v4h-2z" fill="#7a2c17" />
    <path d="M71 14h6v16h-6z" fill="#c9c1b0" /><path d="m70 15 4-13 4 13z" fill="#5a5a50" /><path d="M76 22h4v10h-4z" fill="#e8d5a0" />
    <path d="M4 35q3-4 7 0v3H4zM20 37q4-4 8 0v2h-8zM52 36q3-3 7 0v2h-7z" fill="#8c6b4a" />
    <path d="m6 4 1.200 3.800L11 9 7.200 10.200 6 14l-1.200-3.800L1 9l3.800-1.200z" fill="#d77cf0" /><circle cx="34" cy="10" r="2.200" fill="#64cfe6" /><circle cx="65" cy="6" r="2.200" fill="#f7a91b" />
  </svg>
);

const UnityHex = ({ dark }) => (
  <svg width="22" height="24" viewBox="0 0 22 24"><path d="M11 0l10 5.500v13L11 24 1 18.500v-13z" fill={dark ? "#7d7d7d" : "#e4e4e4"} />{dark && <path d="M21 5.500v13L11 24v-4l7-8z" fill="#0b0b0b" />}<path d="M11 5l6 3.500v7L11 19l-6-3.500v-7z" fill={dark ? "#fff" : "#333"} /><path d="M11 12v6M11 12 6 9.200M11 12l5-2.800" stroke={dark ? "#111" : "#eee"} strokeWidth="2" /></svg>
);

const APPS = [
  { k: "cortana", i: <svg width="18" height="18"><circle cx="9" cy="9" r="6.800" fill="none" stroke="#fff" strokeWidth="2" /></svg> },
  { k: "tasks", i: <svg width="17" height="16" fill="none" stroke="#fff"><path d="M1.500 4.500h9v7h-9zM.5 0v2.500h11V0M.5 16v-2.500h11V16M15.500 0v2M15.500 5v11" /><path d="M14.500 3h2v2h-2z" fill="#fff" /></svg> },
  { k: "explorer", u: 1, i: <svg width="22" height="18"><path d="M0 1q0-1 1-1h8l1.500 3H21q1 0 1 1v13H0z" fill="#e9a51c" /><path d="M0 5h22v13H0z" fill="#fbd45e" /><path d="M4 18v-6q0-1.500 1.500-1.500h11Q18 10.500 18 12v6h-4v-3.500H8V18z" fill="#2f8fe0" /></svg> },
  { k: "mail", i: <svg width="25" height="22"><path d="M0 8 12.500 0 25 8v4H0z" fill="#0d5fb0" /><path d="M2 7h21v10H2z" fill="#f4f8fb" /><path d="M0 8.500 12.500 16 25 8.500V22H0z" fill="#2ba8e8" /><path d="M0 22 12.500 14 25 22z" fill="#1d8fd8" /></svg> },
  { k: "chrome", u: 1, i: <svg width="26" height="26" viewBox="0 0 26 26"><circle cx="12" cy="12" r="11.500" fill="#e23b2e" /><path d="M2 6.300A11.500 11.500 0 0 0 12 23.500l5-8.600-5-3z" fill="#2ba24c" /><path d="M12 23.500A11.500 11.500 0 0 0 22 6.500H12l4.500 8z" fill="#fbc116" /><circle cx="12" cy="12" r="5.300" fill="#fff" /><circle cx="12" cy="12" r="4.200" fill="#3b7ded" /><circle cx="18.500" cy="19" r="6.800" fill="#cbb7a5" /><path d="M12.500 16q6-7 12 0-6 3-12 0z" fill="#8a6d56" /><path d="M14 20h9M15 22.500h6" stroke="#f3ece6" strokeWidth="1.500" /></svg> },
  { k: "snip", i: <svg width="24" height="24" viewBox="0 0 24 24"><ellipse cx="11" cy="8" rx="10.500" ry="6.500" transform="rotate(-25 11 8)" fill="#f3f3f3" stroke="#cf3d35" strokeWidth="1.800" /><path d="m2 14 5 5 5-1" stroke="#b0b0b0" strokeWidth="2" fill="none" /><path d="m8 6 9 10M14 5l-1 11" stroke="#8b98a5" strokeWidth="1.300" /><circle cx="14" cy="19.500" r="2.500" fill="none" stroke="#2389cf" strokeWidth="1.800" /><circle cx="20" cy="16.500" r="2.500" fill="none" stroke="#2389cf" strokeWidth="1.800" /></svg> },
  { k: "talk", u: 1, i: <span className="relative flex h-[24px] w-[24px] items-center justify-center bg-[#fbe300]"><svg width="20" height="18" className="absolute"><path d="M10 1c5.500 0 9.500 3.300 9.500 7.300S15.500 15.500 10 15.500l-4.500 2.300.8-3C2.800 13.700.5 11.300.5 8.300.5 4.300 4.500 1 10 1z" fill="#3b1e1e" /></svg><b className="relative -mt-[2px] text-[6px] leading-none text-[#fbe300]">TALK</b></span> },
  { k: "unityhub", u: 1, i: <UnityHex /> },
  { k: "vs", u: 1, i: <svg width="24" height="24" viewBox="0 0 24 24"><path d="M17 0l7 3v18l-7 3L6.500 14 2.500 17.500 0 16V8l2.500-1.500L6.500 10zM17 7l-6 5 6 5zM2 9.500v5L4.500 12z" fill="#8a4fd0" fillRule="evenodd" /><path d="m17 0 7 3v18l-7 3z" fill="#b787f5" /></svg> },
  { k: "hs", u: 1, i: <span className="flex h-[23px] w-[23px] items-center justify-center rounded-full bg-[linear-gradient(#4ca02c_38%,#eef3ea_38%)] shadow-[inset_0_0_0_1px_#b8dca8]"><b className="text-[12px] leading-none text-black font-['Inter',sans-serif]">HS</b></span> },
  { k: "fz", u: 1, i: <span className="flex h-[24px] w-[24px] items-center justify-center border border-dashed border-[#7a0000] bg-[#b50707]"><b className="text-[17px] italic leading-none text-white font-['Inter',sans-serif]">Fz</b></span> },
  { k: "unity", u: 2, i: <UnityHex dark /> },
  { k: "code", u: 1, i: <svg width="24" height="24" viewBox="0 0 24 24"><path d="M17 0l7 3v18l-7 3L7 14.500 2.500 18 0 16.700 5 12 0 7.300 2.500 6 7 9.500zM17.500 7 11 12l6.500 5z" fill="#2489ca" fillRule="evenodd" /><path d="m17 0 7 3v18l-7 3z" fill="#35a6f0" /></svg> },
  { k: "discord", u: 1, i: <span className="flex h-[24px] w-[24px] items-center justify-center rounded-full bg-[#5865f2]"><FaDiscord size={15} color="#fff" /></span> },
  { k: "word", u: 1, i: <span className="flex h-[21px] w-[24px] items-center bg-[linear-gradient(#41a5ee_25%,#2b7cd3_25%_50%,#185abd_50%_75%,#103f91_75%)] bg-no-repeat bg-[position:6px_0]"><b className="flex h-[13px] w-[13px] items-center justify-center bg-[#185abd] text-[10px] leading-none text-white">W</b></span> },
  { k: "obs", u: 1, i: <svg width="24" height="24" viewBox="0 0 24 24"><circle cx="12" cy="12" r="11" fill="#1b1b1f" stroke="#d0d0d0" strokeWidth="1.300" /><path d="M11 3.500q-4 4 1 8.500 6-2 8 3M12 12q-1 7-8 6M12 12Q8 9 4 12" stroke="#c4c4c4" strokeWidth="1.800" fill="none" /></svg> },
];

function Taskbar() {
  return (
    <div className="flex h-[40px] shrink-0 items-center bg-[linear-gradient(90deg,#2c3540_0px,#2d3539_400px,#2a3032_900px,#1f2e29_1080px,#30302a_1230px,#2f302c_1450px,#3b3633_1700px,#3a3a3c_1920px)] text-white font-['Noto_Sans_CJK_KR',sans-serif]">
      <div className="flex w-[48px] shrink-0 justify-center"><svg width="16" height="16"><path d="M0 2.200 6.600 1.300v6.200H0zM7.500 1.200 16 0v7.500H7.500zM0 8.400h6.600v6.300L0 13.800zM7.500 8.400H16V16l-8.500-1.200z" fill="#fff" /></svg></div>
      <div className="flex h-[40px] w-[344px] shrink-0 items-center border border-b-[#bbb] border-[#d8d8d8] bg-[#f2f2f2] text-[#222]">
        <svg width="17" height="17" className="ml-[11px]" fill="none" stroke="#222" strokeWidth="1.300"><circle cx="10.500" cy="6" r="5.300" /><path d="M6.800 10 .8 16.500" /></svg>
        <span className="ml-[12px] w-[222px] whitespace-nowrap text-[16px] font-light tracking-[0.450px]">검색하려면 여기에 입력하십시</span>
        <Castle />
      </div>
      {APPS.map(({ k, u, i }) => (
        <div key={k} className={"flex h-full w-[49px] shrink-0 flex-col items-center " + (u === 2 ? "bg-[#545b5b]" : "")}>
          <div className="flex h-[38px] items-center">{i}</div>
          {u ? <div className={"h-[2px] bg-[#bb96f3] " + (u === 2 ? "w-full" : "w-[40px]")} /> : null}
        </div>
      ))}
      <span className="grow" />
      <svg width="25" height="26" viewBox="0 0 25 26"><path d="M1 15Q3 7 11 6q9 1 10.500 9z" fill="#4c9fe8" /><path d="M1 15q2-8 10-9-4 4-4 9z" fill="#7dc0f5" /><path d="M11 14v8q0 2.500-3 2.500" stroke="#777f86" strokeWidth="2" fill="none" /><path d="m12 4 1-2M16 4l1-2M20 6l1-2M22 10l1-2M18 8l1-2" stroke="#5fb2f2" strokeWidth="1.500" /></svg>
      <span className="ml-[7px] w-[98px] whitespace-nowrap text-[15px] tracking-[0.400px]">비 내리는 중</span>
      <svg width="13" height="8" className="mr-[12px]"><path d="m.7 7 5.800-5.500L12.300 7" fill="none" stroke="#fff" strokeWidth="1.500" /></svg>
      <svg width="12" height="17" className="mr-[11px]"><rect x="3" y="0" width="6" height="12" rx="2" fill="#fff" /><path d="M.7 8v3.500q0 2.500 2.500 2.500h5.600q2.500 0 2.500-2.500V8M6 14v2M3 16.300h6" stroke="#fff" fill="none" /></svg>
      <svg width="17" height="14" className="mr-[8px]" fill="none" stroke="#fff"><path d="M5 1.500h11.500v8H3.500V6M7 13h6M10 9.500V13M.5.5h4v5h-4zM2 2v2" /></svg>
      <svg width="17" height="14" className="mr-[6px]" fill="none" stroke="#fff"><path d="M.5 4.500h2.700L6.500 1.500v11L3.200 9.500H.5zM8.500 5q1.500 2 0 4M11 3q3 4 0 8M13.500 1q4.500 6 0 12" /></svg>
      <svg width="15" height="15" className="mr-[14px]"><circle cx="7.500" cy="7.500" r="7.500" fill="#a5a5a5" /><path d="m4.500 4.500 6 6M10.500 4.500l-6 6" stroke="#2d2d2d" strokeWidth="1.800" /></svg>
      <span className="mr-[13px] flex h-[16px] w-[16px] shrink-0 items-center justify-center border border-white bg-[#1c1c1c] text-[13px] font-bold leading-none text-white">한</span>
      <span className="flex w-[75px] shrink-0 flex-col items-center whitespace-nowrap text-[12px] leading-[18px]"><span>오전 11:52</span><span className="tracking-[0.150px]">2022-08-29</span></span>
      <span className="relative ml-[12px] mr-[10px] flex h-[26px] w-[28px]">
        <svg width="17" height="17"><path d="M0 1h16v11h-5v4l-4-4H0z" fill="#fff" /><path d="M2.500 4.500h11M2.500 7.500h11" stroke="#333" /></svg>
        <span className="absolute left-[5px] top-[9px] flex h-[16px] w-[20px] items-center justify-center rounded-full border border-[#999] bg-[#3a3a3c] text-[12px] font-medium leading-none">12</span>
      </span>
      <span className="mr-[4px] h-full w-px bg-[#8a8a8a]" />
    </div>
  );
}

export default function App() {
  return (
    <div className="flex h-[1080px] w-[1920px] flex-col overflow-hidden bg-[#161616] text-[12px] leading-[14px] text-[#a3a3a3] font-[Inter,'Liberation_Sans',sans-serif]">
      <TitleBar />
      <TopBar />
      <div className="flex h-[945px] shrink-0 gap-[2px]">
        <div className="flex w-[1526px] shrink-0 flex-col">
          <div className="flex gap-[2px]">
            <Hierarchy />
            <div className="min-w-0 grow"><GameView /></div>
          </div>
          <Project />
        </div>
        <Inspector />
      </div>
      <StatusBar />
      <Taskbar />
    </div>
  );
}
